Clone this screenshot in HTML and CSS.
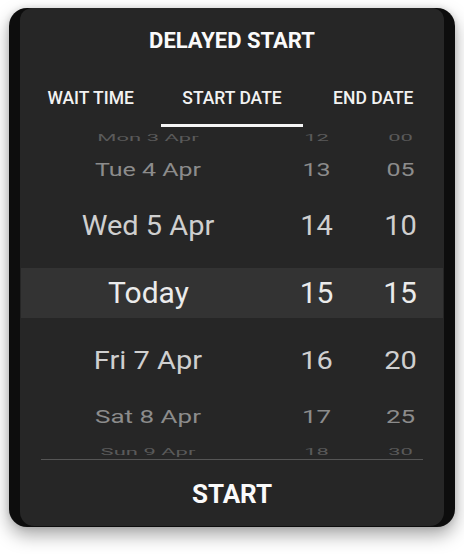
FILE: index.html
```html
<!DOCTYPE html>
<html lang="en">
<head>
<meta charset="utf-8">
<title>Delayed start</title>
<link rel="stylesheet" href="styles.css">
</head>
<body>
<div class="frame">
  <div class="panel">
    <div class="title">DELAYED START</div>
    <div class="tabs">
      <div class="tab"><span class="tab-label">WAIT TIME</span></div>
      <div class="tab active"><span class="tab-label">START DATE</span><span class="tab-bar"></span></div>
      <div class="tab"><span class="tab-label">END DATE</span></div>
    </div>
    <div class="wheel">
      <div class="row r-mon"><span>Mon 3 Apr</span><span>12</span><span>00</span></div>
      <div class="row r-tue"><span>Tue 4 Apr</span><span>13</span><span>05</span></div>
      <div class="row r-wed"><span>Wed 5 Apr</span><span>14</span><span>10</span></div>
      <div class="row r-today"><span>Today</span><span>15</span><span>15</span></div>
      <div class="row r-fri"><span>Fri 7 Apr</span><span>16</span><span>20</span></div>
      <div class="row r-sat"><span>Sat 8 Apr</span><span>17</span><span>25</span></div>
      <div class="row r-sun"><span>Sun 9 Apr</span><span>18</span><span>30</span></div>
    </div>
    <div class="divider"></div>
    <div class="action">START</div>
  </div>
</div>
</body>
</html>
```
FILE: styles.css
```css
* { box-sizing: border-box; }
html, body { margin: 0; padding: 0; }
body {
  background: #ffffff;
  width: 464px;
  height: 554px;
  overflow: hidden;
  font-family: Roboto, "Noto Sans", sans-serif;
}
.frame {
  margin: 8px 9px 0;
  width: 446px;
  height: 519px;
  background: #0d0d0d;
  border-radius: 18px;
  padding: 0 11px 1px;
  box-shadow: 0 8px 18px rgba(0,0,0,0.35), 0 0 6px rgba(0,0,0,0.12);
}
.panel {
  height: 518px;
  background: #262626;
  border-radius: 12px 12px 14px 14px;
  display: flex;
  flex-direction: column;
  overflow: hidden;
}
.title {
  padding-top: 22px;
  height: 44px;
  font-size: 22px;
  line-height: 22px;
  font-weight: 700;
  color: #fafafa;
  text-align: center;
}
.tabs {
  display: grid;
  grid-template-columns: 1fr 1fr 1fr;
  height: 75px;
  padding-top: 38px;
}
.tab {
  display: flex;
  flex-direction: column;
  align-items: center;
}
.tab-label {
  font-size: 17.5px;
  line-height: 17px;
  font-weight: 500;
  color: #f2f2f2;
  height: 17px;
  white-space: nowrap;
}
.tab-bar {
  margin-top: 17px;
  width: 100%;
  height: 3px;
  background: #f5f5f5;
}
.wheel {
  height: 332px;
  overflow: hidden;
  display: flex;
  flex-direction: column;
}
.row {
  display: grid;
  grid-template-columns: 256px 81px 87px;
  align-items: center;
  justify-items: center;
  flex: none;
}
.row span {
  display: inline-block;
  line-height: 1;
  white-space: nowrap;
}
.r-mon { height: 16px; padding-bottom: 3px; font-size: 22px; color: #5a5a5a; }
.r-mon span { transform: scaleY(0.4); }
.r-tue { height: 53px; font-size: 25px; color: #8c8c8c; }
.r-tue span { transform: scaleY(0.75); }
.r-wed { height: 72px; padding-bottom: 14px; font-size: 29px; color: #cfcfcf; }
.r-wed span { transform: scaleY(0.95); }
.r-today {
  height: 50px;
  font-size: 30px;
  color: #ebebeb;
  background: #333333;
  margin: 0 1px;
  grid-template-columns: 255px 81px 86px;
}
.r-fri { height: 77px; padding-top: 8px; font-size: 29px; color: #cfcfcf; }
.r-fri span { transform: scaleY(0.92); }
.r-sat { height: 43px; font-size: 26px; color: #8c8c8c; }
.r-sat span { transform: scaleY(0.7); }
.r-sun { height: 21px; padding-top: 3px; font-size: 22px; color: #5a5a5a; }
.r-sun span { transform: scaleY(0.38); }
.divider {
  height: 1px;
  margin: 0 21px;
  background: #555555;
  flex: none;
}
.action {
  height: 66px;
  padding-top: 2px;
  display: flex;
  align-items: center;
  justify-content: center;
  font-size: 26px;
  font-weight: 700;
  color: #fafafa;
}
```
